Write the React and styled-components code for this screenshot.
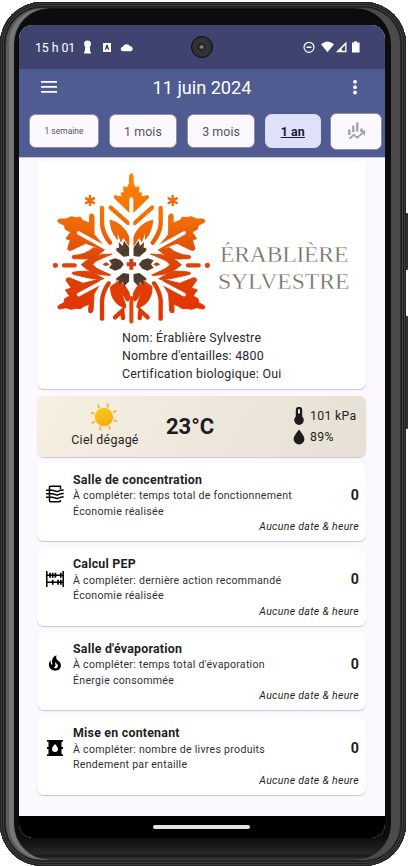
import React from 'react';
import styled, { createGlobalStyle } from 'styled-components';

const GlobalStyle = createGlobalStyle`
  *, *::before, *::after { box-sizing: border-box; }
  body { margin: 0; background: #fff; font-family: Roboto, "Liberation Sans", sans-serif; color: #1f1f24; overflow: hidden; }
  svg { display: block; flex: none; }
`;

const Stage = styled.div`
  position: relative;
  width: 411px;
  height: 866px;
  padding-top: 2px;
`;

const SideButton = styled.i`
  position: absolute;
  left: 403px;
  top: ${(p) => p.$top}px;
  width: 5px;
  height: ${(p) => p.$height}px;
  background: #303030;
  border-radius: 0 1px 1px 0;
`;

const Phone = styled.div`
  position: relative;
  width: 406px;
  height: 864px;
  padding: 23px 21px 28px 19px;
  border-radius: 42px;
  background: linear-gradient(#0c0c0c 0, #0c0c0c 835px, #272727 852px, #151515 854px, #303030 856px, #2b2b2b);
  box-shadow:
    inset 0 0 0 1px #222,
    inset 0 0 0 2px #3c3c3c,
    inset 0 0 0 3px #1c1c1c,
    inset 0 0 0 4px #444,
    inset 0 0 0 5px #1a1a1a,
    inset 0 0 0 6px #2c2c2c,
    inset 3px 0 0 6px #5c5c5c,
    inset 8px 0 1px 6px #787878,
    inset -9px 0 0 6px #4b4b4b;
`;

const Screen = styled.div`
  display: flex;
  flex-direction: column;
  width: 366px;
  height: 813px;
  border-radius: 14px;
  overflow: hidden;
  background: #fbf8ff;
`;

const StatusBar = styled.div`
  position: relative;
  display: flex;
  align-items: center;
  height: 44px;
  flex: none;
  padding: 0 24px 0 16px;
  background: #3e446f;
  color: #fff;
`;

const Clock = styled.span`
  width: 48px;
  font-size: 12.4px;
  letter-spacing: -0.1px;
  white-space: nowrap;
`;

const Camera = styled.i`
  position: absolute;
  left: 171.5px;
  top: 11px;
  width: 22px;
  height: 22px;
  border-radius: 50%;
  border: 1.5px solid #0c0c0e;
  background: radial-gradient(circle at 48% 50%, #8c7f85 0 1px, #26262b 2.5px, #2a2a2a 4px, #343434 6px, #303030 9px);
`;

const AppHeader = styled.header`
  height: 89px;
  flex: none;
  background: #505b92;
  border-bottom: 1px solid #c5c5dc;
  color: #fff;
`;

const TitleRow = styled.div`
  display: grid;
  grid-template-columns: 60px 1fr 60px;
  align-items: center;
  justify-items: center;
  height: 36px;
`;

const Title = styled.h1`
  margin: 0;
  font-size: 18.2px;
  font-weight: 400;
  letter-spacing: -0.02px;
  color: #fff;
`;

const Periods = styled.div`
  display: flex;
  align-items: center;
  height: 52px;
  padding: 0 3px 0 10px;
`;

const Period = styled.button`
  display: flex;
  align-items: center;
  justify-content: center;
  width: ${(p) => p.$width}px;
  height: ${(p) => (p.$tall ? 37 : 34)}px;
  flex: none;
  padding: 0;
  margin-right: 9.7px;
  border: 1px solid ${(p) => (p.$active ? '#dcdcf4' : '#918f9b')};
  border-radius: 6.5px;
  background: ${(p) => (p.$active ? '#dfe0fa' : '#fbf8ff')};
  color: ${(p) => (p.$active ? '#171a38' : '#55545d')};
  font: ${(p) => (p.$active ? 700 : 400)} ${(p) => (p.$small ? 8.4 : 12.4)}px Roboto, sans-serif;
  letter-spacing: ${(p) => (p.$small ? 0.05 : 0.1)}px;
  text-decoration: ${(p) => (p.$active ? 'underline' : 'none')};
`;

const Content = styled.main`
  display: flex;
  flex-direction: column;
  gap: 6.7px;
  flex: none;
  height: 658px;
  padding: 4px 19px 0 18px;
  background: #fbf8ff;
`;

const Card = styled.section`
  flex: none;
  border-radius: 6.5px;
  background: #fff;
  box-shadow: 0 1px 1px #c9c7cd;
`;

const Identity = styled(Card)`
  height: 227px;
  border-radius: 0 0 6.5px 6.5px;
`;

const Facts = styled.div`
  padding: 0 0 0 85px;
  font-size: 12.4px;
  line-height: 17.8px;
  letter-spacing: 0.23px;
  color: #29292d;
`;

const Weather = styled(Card)`
  display: grid;
  grid-template-columns: 136px 1fr 73px;
  height: 61px;
  background: linear-gradient(120deg, #f5f0e2, #eee8dc 50%, #e6dfd3);
`;

const Sky = styled.div`
  display: flex;
  flex-direction: column;
  align-items: center;
  padding-top: 7px;
  font-size: 12.4px;
  line-height: 17px;
  letter-spacing: 0.26px;
`;

const Temperature = styled.div`
  align-self: center;
  justify-self: start;
  margin-left: -7px;
  font-size: 22px;
  font-weight: 700;
  color: #1c1c20;
`;

const Measures = styled.div`
  display: flex;
  flex-direction: column;
  gap: 3px;
  padding-top: 11px;
`;

const Measure = styled.div`
  display: flex;
  align-items: center;
  gap: 5px;
  height: 18px;
  font-size: 12.3px;
  letter-spacing: 0.3px;
  white-space: nowrap;
`;

const TaskCard = styled(Card)`
  display: grid;
  grid-template-columns: 36px 1fr auto;
  grid-template-rows: 47.5px 15px;
  height: 77.8px;
  padding: 8.5px 7px 0 0;
`;

const TaskIcon = styled.div`
  display: flex;
  justify-content: center;
  padding-top: 13.5px;
`;

const TaskText = styled.div`
  font-size: 10.6px;
  line-height: 15.5px;
  letter-spacing: 0.27px;
  white-space: nowrap;
  color: #303034;
`;

const TaskTitle = styled.h2`
  margin: 0;
  font-size: 12.4px;
  font-weight: 700;
  line-height: 16.5px;
  letter-spacing: 0.22px;
  color: #1f1f24;
`;

const Total = styled.b`
  padding-top: 13px;
  font-size: 14.2px;
  line-height: 20px;
`;

const DateNote = styled.em`
  grid-column: 1 / 4;
  justify-self: end;
  font-size: 10.5px;
  line-height: 15px;
  letter-spacing: 0.32px;
`;

const NavBar = styled.footer`
  display: flex;
  justify-content: center;
  flex: 1;
  padding: 9px 2px 0 0;
  background: #000;
`;

const HomePill = styled.i`
  width: 97px;
  height: 4px;
  border-radius: 2px;
  background: #e4e4e4;
`;

const StatusIcons = styled.svg``;

function LeftStatus() {
  return (
    <StatusIcons width="52" height="16" viewBox="0 0 52 16" fill="#fff">
      <circle cx="4.5" cy="5" r="3.4" />
      <path d="M2.3 7h4.4l.6 6H8v1.5H1V13h.7z" />
      <path fillRule="evenodd" d="M20 4h8v9h-8z M23.3 5.7L21.7 11h1l.3-1.2h2l.4 1.2h1l-1.7-5.3z" />
      <path d="M40 12.2a2.2 2.2 0 0 1-.2-4.4 4 4 0 0 1 7.3-.5 2.5 2.5 0 0 1 .8 4.9z" />
    </StatusIcons>
  );
}

function RightStatus() {
  return (
    <StatusIcons width="58" height="16" viewBox="0 0 58 16" fill="#fff">
      <circle cx="6" cy="8.3" r="5" fill="none" stroke="#fff" strokeWidth="1.2" />
      <path d="M3.5 7.6h5v1.4h-5z" />
      <path d="M18 5.2Q24.5 0 31 5.2L24.5 13.3z" />
      <path d="M43.5 2.6V13.2H32.8z" />
      <path d="M42.2 6v5.8h-3.4V9.5z" fill="#3e446f" />
      <path d="M51.3 2.3h2.6v1.2h2.7v10H49v-10h2.3z" />
    </StatusIcons>
  );
}

const MenuIcon = () => (
  <svg width="18" height="12" viewBox="0 0 18 12" fill="#fff">
    <path d="M1 0h16v1.8H1zM1 5h16v1.8H1zM1 10h16v1.8H1z" />
  </svg>
);

const MoreIcon = () => (
  <svg width="7" height="16" viewBox="0 0 7 16" fill="#fff">
    <circle cx="3" cy="2.8" r="1.9" />
    <circle cx="3" cy="8.2" r="1.9" />
    <circle cx="3" cy="13.5" r="1.9" />
  </svg>
);

const ChartIcon = () => (
  <svg width="19" height="20" viewBox="0 0 19 20" fill="none" stroke="#a09ea6">
    <path d="M2.3 8.5v5.5M6.3 4.5v6.5M10.3 1.5v9M14.5 7.5v3" strokeWidth="2.3" />
    <path d="M2.5 17.7l4.3-3.9 3.5 2.8 6.7-6M13.3 10.2h4v4" strokeWidth="1.6" />
  </svg>
);

const LogoHalf = () => (
  <g>
    <g fill="url(#maple)" stroke="url(#maple)" strokeWidth="3" strokeLinejoin="round">
      <path d="M275 41q-5 0-6 7l-1 23-7 13-10-4 1 18-9 1 4 12-23-4q-4 4 0 8l50 48h1z" />
      <path d="M58 177q-8 4-3 10l18 9 3 12 16 8-14 20 13 4-8 26q2 8 12 4l42-20 48 17 8-7-31-37 0-55q-3-10-12-5-3 5-1 26l-22-8-6-10-14 2-13-3-16 7z" />
      <path d="M58 447q-8-4-3-10l17-9 2-12 15-8-13-18 18-6-16-23q0-8 9-8l42 17 48-12 6 8-21 36-3 50q-3 10-12 5-3-5 1-24l-13 4-14 9-14-1-13 3-16-5z" />
      <path fillRule="evenodd" d="M210 180Q253 192 267 232V257L250 231 243 245 231 211 232 238Q211 213 210 180z" />
      <path d="M212 380q-2 30 20 52l22 13q5-2 3-9l-14-42 16 27q11 10 9-22l-12-20-20-16z" />
      <path d="M98 287Q138 284 160 263L195 268Q165 297 131 297L99 296Q94 292 98 287zM98 337Q140 330 160 338L194 358Q170 360 130 350L99 343Q94 340 98 337z" />
      <path fillRule="evenodd" d="M124 314Q152 288 184 284L217 282 186 295Q165 302 158 314 168 326 186 333L217 347 184 344Q150 339 124 314z" />
      <circle cx="46" cy="316" r="6.5" />
    </g>
    <g fill="none" stroke="url(#maple)" strokeWidth="13" strokeLinecap="round">
      <path d="M212 143l52 46M186 144v48q2 28 24 56M186 476v-54q2-26 20-52M72 316h32" />
      <path d="M225 472l22-20 2 22" />
    </g>
    <path d="M116 219L222 278M116 404L224 346" fill="none" stroke="#fff" strokeWidth="11" strokeLinecap="round" />
    <path d="M274 173L222 129" stroke="#fff" strokeWidth="10" strokeLinecap="round" />
    <path d="M187 313l11-6 11 6-11 6z" fill="#c43e10" />
    <path d="M229 263l8 1-1-18 12 12 4-16 16 21v25l-18 2-21-18zM207 301l18-6 16 5 11 13-11 13-16 6-18-9 8-10zM229 362l8-1-1 14 12-8 5 12 15-16v-21l-18-3-21 16z" fill="url(#core)" />
    <path d="M150 108v27M138 115l24 14M162 115l-24 14" stroke="#f26a0a" strokeWidth="7.5" strokeLinecap="round" />
  </g>
);

const LogoGraphic = styled.svg`
  .word {
    font-family: "Liberation Serif", serif;
    font-size: 71px;
    fill: #6f6558;
    stroke: #fff;
    stroke-width: 1.2px;
  }
`;

function Logo() {
  return (
    <LogoGraphic width="329" height="167" viewBox="-9 6 987 501">
      <defs>
        <linearGradient id="maple" gradientUnits="userSpaceOnUse" x1="300" y1="60" x2="250" y2="490">
          <stop offset="0" stopColor="#ff8200" />
          <stop offset=".35" stopColor="#f06a06" />
          <stop offset=".58" stopColor="#dc4709" />
          <stop offset="1" stopColor="#e43200" />
        </linearGradient>
        <radialGradient id="core" gradientUnits="userSpaceOnUse" cx="274" cy="313" r="72">
          <stop offset="0" stopColor="#66443a" />
          <stop offset=".6" stopColor="#48392d" />
          <stop offset="1" stopColor="#6a3f24" />
        </radialGradient>
      </defs>
      <LogoHalf />
      <g transform="translate(548 0) scale(-1 1)"><LogoHalf /></g>
      <path d="M274 118v180M274 332v64" stroke="#fff" strokeWidth="12" strokeLinecap="round" />
      <path d="M268 412q6-8 12 0v74q-6 9-12 0z" fill="#ee4104" />
      <circle cx="274" cy="313" r="23" fill="#fff" />
      <path d="M274 297v32M260 313h28" stroke="#ce3f17" strokeWidth="12" />
      <text className="word" x="540" y="305" textLength="385">ÉRABLIÈRE</text>
      <text className="word" x="534" y="386" textLength="394">SYLVESTRE</text>
    </LogoGraphic>
  );
}

const rays = [0, 45, 90, 135, 180, 225, 270, 315];

const SunIcon = () => (
  <svg width="28" height="28" viewBox="0 0 28 28">
    <defs>
      <linearGradient id="sun" x1="0" y1="0" x2=".4" y2="1">
        <stop offset="0" stopColor="#f8cf10" />
        <stop offset="1" stopColor="#f6ad16" />
      </linearGradient>
    </defs>
    <circle cx="13" cy="14" r="9.2" fill="url(#sun)" />
    {rays.map((angle) => (
      <path key={angle} d="M13 .8v2.4" transform={`rotate(${angle + 18} 13 14)`} stroke="#f5b51b" strokeWidth="1.8" strokeLinecap="round" />
    ))}
  </svg>
);

const ThermoIcon = () => (
  <svg width="12" height="18" viewBox="0 0 12 18" fill="#1c1c20">
    <path fillRule="evenodd" d="M2.8 3a3.2 3.2 0 0 1 6.4 0v6.5a4.8 4.8 0 1 1-6.4 0zM5 3v3.5h2V3a1 1 0 0 0-2 0z" />
  </svg>
);

const DropIcon = () => (
  <svg width="12" height="16" viewBox="0 0 12 16" fill="#1c1c20">
    <path d="M6 .5C8.5 4 11.4 7 11.4 10A5.4 5.4 0 0 1 .6 10C.6 7 3.5 4 6 .5z" />
  </svg>
);

const CoilIcon = () => (
  <svg width="18" height="18" viewBox="0 0 18 18" fill="none" stroke="#000" strokeWidth="1.5">
    <path d="M14.5 4.2V1.2h-10q-1 0-1 1v13.6q0 1 1 1h8.5q1.5 0 1.5-1.8" />
    <path d="M0 5.2h6M0 8.7h6M0 12.2h6" />
    <path d="M6 5.2c3 0 3 1.6 5.5 1.2s2.500-1.800 6.200-1.400M6 8.700c3 0 3 1.600 5.500 1.200s2.500-1.800 6.200-1.400M6 12.200c3 0 3 1.600 5.500 1.200s2.500-1.800 6.200-1.400" />
  </svg>
);

const AbacusIcon = () => (
  <svg width="18" height="18" viewBox="0 0 18 18" fill="none" stroke="#000" strokeWidth="1.4">
    <path d="M.8 1v16M17.200 1v16" strokeWidth="1.500" />
    <path d="M1 5.300h16M1 12.300h16" />
    <path d="M4 2.800v5M6.700 2.800v5M9.400 2.800v5M14.800 2.800v5M6.700 9.800v5M12 9.800v5M14.800 9.800v5" strokeWidth="1.700" />
  </svg>
);

const FlameIcon = () => (
  <svg width="18" height="18" viewBox="0 0 24 24">
    <path d="M17.66 11.2c-.23-.3-.51-.56-.77-.82-.67-.6-1.43-1.03-2.07-1.66C13.33 7.26 13 4.85 13.95 3c-.95.23-1.78.75-2.49 1.32-2.59 2.08-3.61 5.75-2.39 8.9.04.1.08.2.08.33 0 .22-.15.42-.35.5-.23.1-.47.04-.66-.12a.58.58 0 0 1-.14-.17c-1.13-1.43-1.31-3.48-.55-5.12C5.78 10 4.87 12.3 5 14.47c.06.5.12 1 .29 1.5.14.6.41 1.2.71 1.73 1.08 1.73 2.95 2.97 4.96 3.22 2.14.27 4.43-.12 6.07-1.6 1.83-1.66 2.47-4.32 1.53-6.6l-.13-.26c-.21-.46-.77-1.26-.77-1.26m-3.16 6.3c-.28.24-.74.5-1.1.6-1.12.4-2.24-.16-2.9-.82 1.19-.28 1.9-1.16 2.11-2.05.17-.8-.15-1.46-.28-2.23-.12-.74-.1-1.37.17-2.06.19.38.39.76.63 1.06.77 1 1.98 1.44 2.24 2.8.04.14.06.28.06.43.03.82-.33 1.72-.93 2.27z" transform="translate(-1.9 -1.9) scale(1.15)" />
  </svg>
);

const BarrelIcon = () => (
  <svg width="18" height="18" viewBox="0 0 18 18">
    <path d="M1 1h16v1.800h-1.500v5.300H17v1.800h-1.500v5.300H17V17H1v-1.800h1.500V9.900H1V8.100h1.500V2.800H1z" />
    <path d="M9 5c1.400 2 3 3.200 3 5a3 3 0 0 1-6 0c0-1.800 1.600-3 3-5z" fill="#fff" />
  </svg>
);

const tasks = [
  { icon: CoilIcon, title: 'Salle de concentration', todo: 'À compléter: temps total de fonctionnement', detail: 'Économie réalisée' },
  { icon: AbacusIcon, title: 'Calcul PEP', todo: 'À compléter: dernière action recommandé', detail: 'Économie réalisée' },
  { icon: FlameIcon, title: "Salle d'évaporation", todo: "À compléter: temps total d'évaporation", detail: 'Énergie consommée' },
  { icon: BarrelIcon, title: 'Mise en contenant', todo: 'À compléter: nombre de livres produits', detail: 'Rendement par entaille' },
];

function Task({ icon: Icon, title, todo, detail }) {
  return (
    <TaskCard>
      <TaskIcon><Icon /></TaskIcon>
      <TaskText>
        <TaskTitle>{title}</TaskTitle>
        <div>{todo}</div>
        <div>{detail}</div>
      </TaskText>
      <Total>0</Total>
      <DateNote>Aucune date &amp; heure</DateNote>
    </TaskCard>
  );
}

const Spacer = styled.div`flex: 1;`;

export default function App() {
  return (
    <Stage>
      <GlobalStyle />
      <SideButton $top={213} $height={57} />
      <SideButton $top={316} $height={113} />
      <Phone>
        <Screen>
          <StatusBar>
            <Clock>15 h 01</Clock>
            <LeftStatus />
            <Spacer />
            <Camera />
            <RightStatus />
          </StatusBar>
          <AppHeader>
            <TitleRow>
              <MenuIcon />
              <Title>11 juin 2024</Title>
              <MoreIcon />
            </TitleRow>
            <Periods>
              <Period $width={70} $small>1 semaine</Period>
              <Period $width={68.5}>1 mois</Period>
              <Period $width={68.5}>3 mois</Period>
              <Period $width={55.5} $active>1 an</Period>
              <Period $width={52} $tall><ChartIcon /></Period>
            </Periods>
          </AppHeader>
          <Content>
            <Identity>
              <Logo />
              <Facts>
                <div>Nom: Érablière Sylvestre</div>
                <div>Nombre d'entailles: 4800</div>
                <div>Certification biologique: Oui</div>
              </Facts>
            </Identity>
            <Weather>
              <Sky><SunIcon />Ciel dégagé</Sky>
              <Temperature>23°C</Temperature>
              <Measures>
                <Measure><ThermoIcon />101 kPa</Measure>
                <Measure><DropIcon />89%</Measure>
              </Measures>
            </Weather>
            {tasks.map((task) => <Task key={task.title} {...task} />)}
          </Content>
          <NavBar><HomePill /></NavBar>
        </Screen>
      </Phone>
    </Stage>
  );
}
